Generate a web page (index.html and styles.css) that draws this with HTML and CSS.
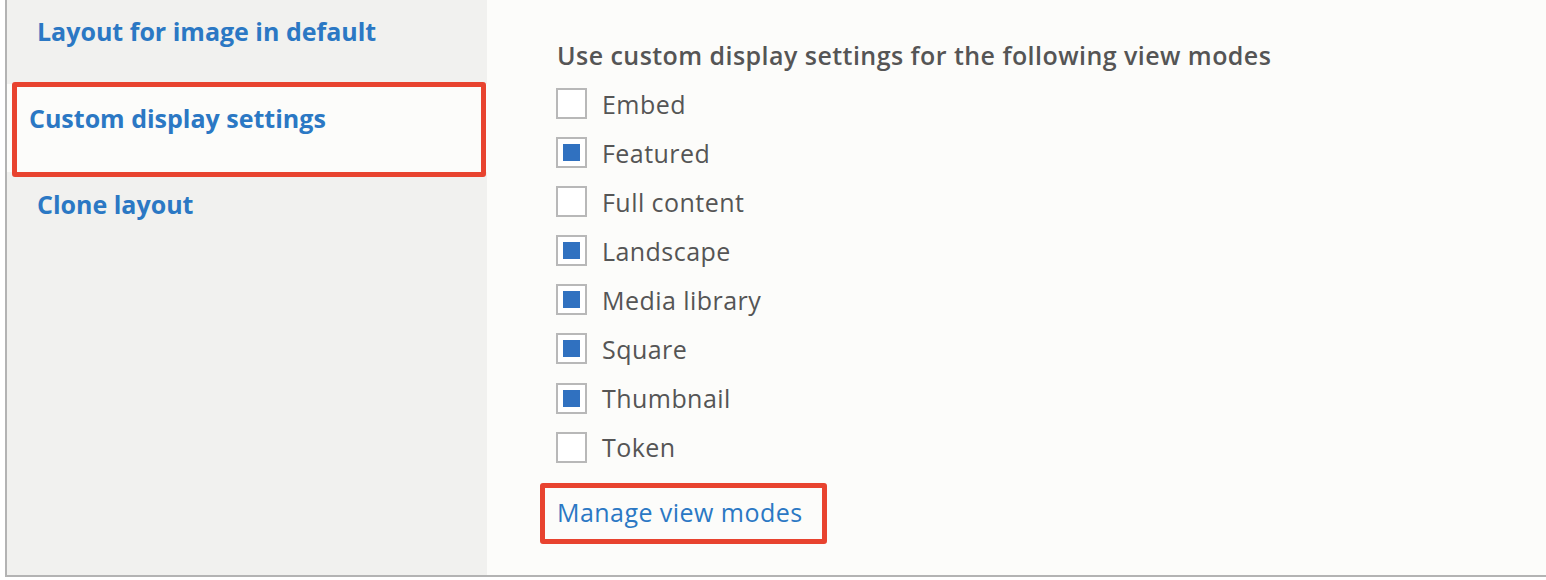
FILE: index.html
```html
<!DOCTYPE html>
<html lang="en">
<head>
<meta charset="utf-8">
<title>Vertical tabs</title>
<link rel="stylesheet" href="styles.css">
</head>
<body>
<div class="vtabs">
  <ul class="vtabs-menu">
    <li class="vtab"><a href="#">Layout for image in default</a></li>
    <li class="vtab is-selected"><a href="#">Custom display settings</a><span class="mark mark-tab"></span></li>
    <li class="vtab"><a href="#">Clone layout</a></li>
  </ul>
  <div class="vtabs-pane">
    <div class="field-title">Use custom display settings for the following view modes</div>
    <ul class="checks">
      <li class="check"><span class="box"></span><span class="label">Embed</span></li>
      <li class="check"><span class="box on"></span><span class="label">Featured</span></li>
      <li class="check"><span class="box"></span><span class="label">Full content</span></li>
      <li class="check"><span class="box on"></span><span class="label">Landscape</span></li>
      <li class="check"><span class="box on"></span><span class="label">Media library</span></li>
      <li class="check"><span class="box on"></span><span class="label">Square</span></li>
      <li class="check"><span class="box on"></span><span class="label">Thumbnail</span></li>
      <li class="check"><span class="box"></span><span class="label">Token</span></li>
    </ul>
    <div class="manage"><a href="#" class="manage-link">Manage view modes<span class="mark mark-link"></span></a></div>
  </div>
</div>
</body>
</html>
```

FILE: styles.css
```css
html, body {
  margin: 0;
  padding: 0;
  background: #ffffff;
}
body {
  font-family: "Open Sans", "Liberation Sans", sans-serif;
  padding-left: 5px;
}
.vtabs {
  display: flex;
  border-left: 2px solid #b3b3b3;
  border-bottom: 2px solid #b3b3b3;
  background: #fcfcfa;
  box-sizing: border-box;
  height: 577px;
}
.vtabs-menu {
  list-style: none;
  margin: 0;
  padding: 0;
  width: 480px;
  flex: 0 0 480px;
  background: #f1f1ef;
}
.vtab {
  position: relative;
  height: 84px;
  box-sizing: border-box;
  padding: 14px 0 0 30px;
  font-size: 25px;
  line-height: 34px;
  font-weight: 700;
}
.vtab:last-child {
  padding-top: 15px;
}
.vtab a {
  color: #2b78c4;
  text-decoration: none;
}
.vtab.is-selected {
  height: 88px;
  padding: 17px 0 0 22px;
  background: #fcfcfa;
}
.mark {
  position: absolute;
  border: 5px solid #e8432f;
  border-radius: 3px;
  pointer-events: none;
}
.mark-tab {
  left: 5px;
  right: 1px;
  top: -2px;
  bottom: -5px;
}
.vtabs-pane {
  flex: 1;
  padding: 38px 0 0 70px;
  color: #555555;
  letter-spacing: 0.45px;
}
.field-title {
  font-size: 25px;
  line-height: 34px;
  font-weight: 600;
}
.checks {
  list-style: none;
  margin: 16px 0 0 0;
  padding: 0;
  display: flex;
  flex-direction: column;
  gap: 18.1px;
}
.check {
  display: flex;
  align-items: center;
  height: 31px;
  font-size: 25px;
}
.box {
  width: 31px;
  height: 31px;
  box-sizing: border-box;
  border: 2px solid #b8b8b8;
  background: #ffffff;
  display: flex;
  align-items: center;
  justify-content: center;
  margin-left: -1px;
}
.box.on::after {
  content: "";
  width: 17px;
  height: 17px;
  background: #3071c0;
}
.label {
  margin-left: 15px;
  line-height: 34px;
}
.manage {
  margin-top: 32px;
  font-size: 25px;
  line-height: 34px;
}
.manage-link {
  position: relative;
  display: inline-block;
  color: #2b78c4;
  text-decoration: none;
}
.mark-link {
  left: -17px;
  right: -24px;
  top: -12px;
  bottom: -15px;
}
```
